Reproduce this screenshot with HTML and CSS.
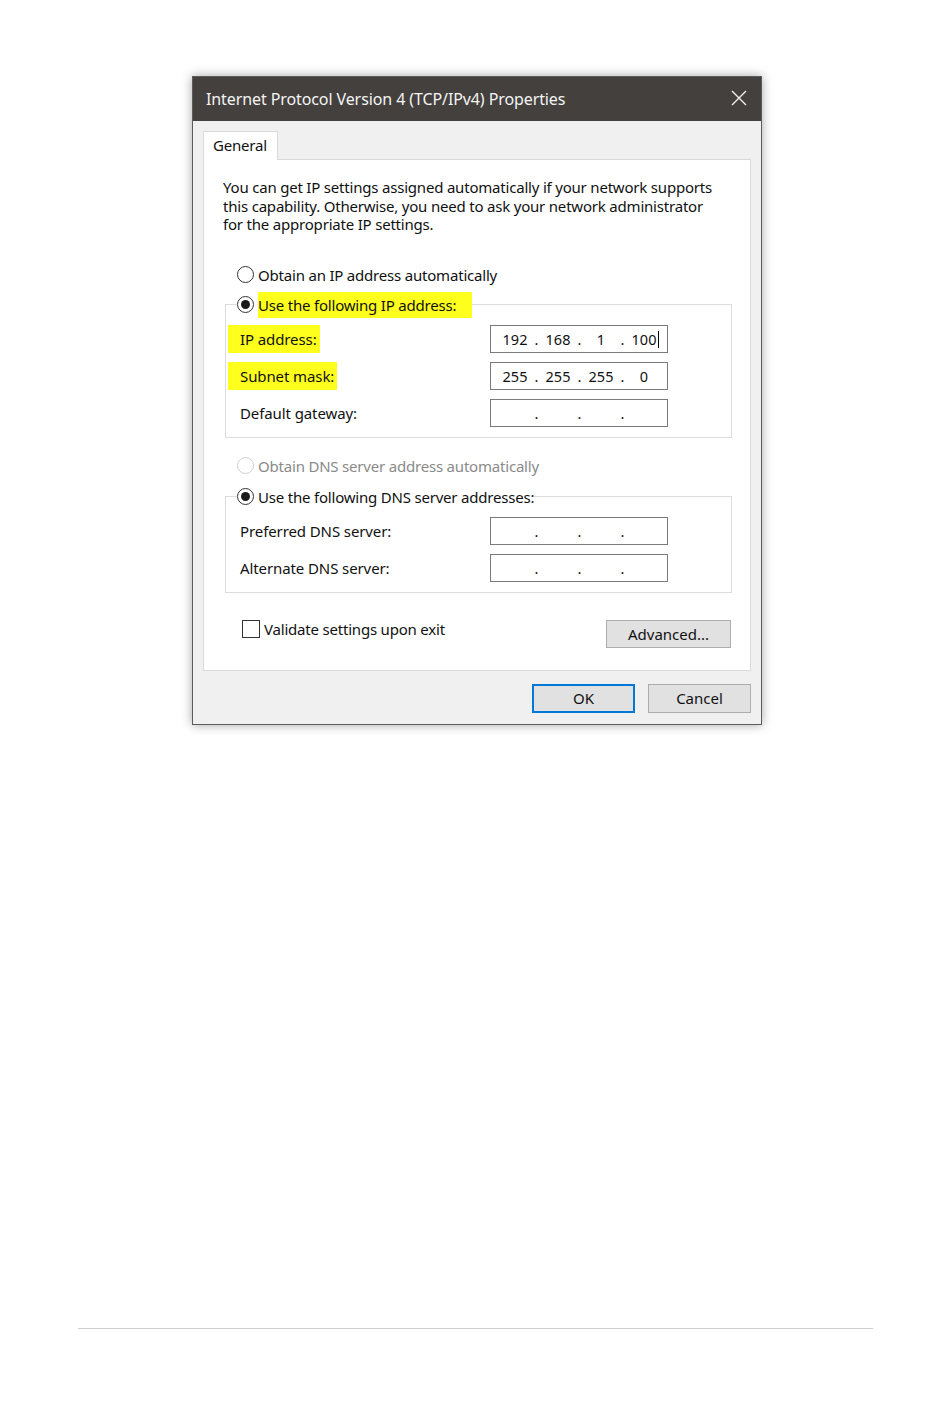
FILE: index.html
```html
<!DOCTYPE html>
<html lang="en">
<head>
    <meta charset="UTF-8">
    <title>Internet Protocol Version 4 (TCP/IPv4) Properties</title>
    <link rel="stylesheet" href="styles.css">
</head>
<body>
    <div class="page">
        <div class="dialog">
            <div class="titlebar">
                <span class="title">Internet Protocol Version 4 (TCP/IPv4) Properties</span>
                <svg class="close" width="16" height="16" viewBox="0 0 16 16">
                    <path d="M1 1 L15 15 M15 1 L1 15" stroke="#f2f2f2" stroke-width="1.4" fill="none"/>
                </svg>
            </div>

            <div class="dialog-body">
                <div class="tab">General</div>
                <div class="panel">
                    <p class="intro">You can get IP settings assigned automatically if your network supports<br>this capability. Otherwise, you need to ask your network administrator<br>for the appropriate IP settings.</p>

                    <div class="option first">
                        <span class="radio"></span>
                        <span>Obtain an IP address automatically</span>
                    </div>
                    <fieldset class="group">
                        <legend class="option">
                            <span class="radio checked"></span>
                            <span class="mark legend-mark">Use the following IP address:</span>
                        </legend>
                        <div class="row">
                            <span class="label"><span class="mark">IP address:</span></span>
                            <div class="ip-box">
                                <span class="octet">192</span><span class="dot">.</span><span class="octet">168</span><span class="dot">.</span><span class="octet">1</span><span class="dot">.</span><span class="octet caret">100</span>
                            </div>
                        </div>
                        <div class="row">
                            <span class="label"><span class="mark">Subnet mask:</span></span>
                            <div class="ip-box">
                                <span class="octet">255</span><span class="dot">.</span><span class="octet">255</span><span class="dot">.</span><span class="octet">255</span><span class="dot">.</span><span class="octet">0</span>
                            </div>
                        </div>
                        <div class="row">
                            <span class="label">Default gateway:</span>
                            <div class="ip-box">
                                <span class="octet"></span><span class="dot">.</span><span class="octet"></span><span class="dot">.</span><span class="octet"></span><span class="dot">.</span><span class="octet"></span>
                            </div>
                        </div>
                    </fieldset>

                    <div class="option second disabled">
                        <span class="radio"></span>
                        <span>Obtain DNS server address automatically</span>
                    </div>
                    <fieldset class="group">
                        <legend class="option">
                            <span class="radio checked"></span>
                            <span>Use the following DNS server addresses:</span>
                        </legend>
                        <div class="row">
                            <span class="label">Preferred DNS server:</span>
                            <div class="ip-box">
                                <span class="octet"></span><span class="dot">.</span><span class="octet"></span><span class="dot">.</span><span class="octet"></span><span class="dot">.</span><span class="octet"></span>
                            </div>
                        </div>
                        <div class="row">
                            <span class="label">Alternate DNS server:</span>
                            <div class="ip-box">
                                <span class="octet"></span><span class="dot">.</span><span class="octet"></span><span class="dot">.</span><span class="octet"></span><span class="dot">.</span><span class="octet"></span>
                            </div>
                        </div>
                    </fieldset>

                    <div class="bottom-row">
                        <div class="check-option">
                            <span class="checkbox"></span>
                            <span>Validate settings upon exit</span>
                        </div>
                        <button class="btn advanced">Advanced...</button>
                    </div>
                </div>

                <div class="footer">
                    <button class="btn ok">OK</button>
                    <button class="btn">Cancel</button>
                </div>
            </div>
        </div>

        <div class="rule"></div>
    </div>
</body>
</html>
```

FILE: styles.css
```css
body {
    margin: 0;
    background: #ffffff;
    font-family: 'Noto Sans', 'Open Sans', sans-serif;
    font-size: 15px;
    color: #111;
}

.page {
    padding-top: 76px;
}

.dialog {
    width: 568px;
    margin-left: 192px;
    border: 1px solid #5c5c5c;
    background: #f0f0f0;
    box-shadow: 0 0 10px rgba(0,0,0,0.35);
}

.titlebar {
    height: 44px;
    background: #43403d;
    display: flex;
    align-items: center;
    justify-content: space-between;
    padding: 0 14px 0 13px;
}

.title {
    color: #f4f4f4;
    font-size: 16px;
    letter-spacing: -0.1px;
}

.close {
    margin-top: -2px;
}

.dialog-body {
    padding: 10px 10px 11px 10px;
}

.tab {
    position: relative;
    width: 64px;
    height: 28px;
    line-height: 26px;
    padding-left: 9px;
    background: #fff;
    border: 1px solid #d9d9d9;
    border-bottom: none;
    margin-bottom: -1px;
    letter-spacing: -0.2px;
}

.panel {
    background: #fff;
    border: 1px solid #d9d9d9;
    padding: 18px 19px 22px 19px;
}

.intro {
    margin: 0;
    line-height: 18.5px;
    letter-spacing: -0.2px;
}

.option {
    display: flex;
    align-items: center;
    gap: 4px;
    height: 22px;
    letter-spacing: -0.2px;
}

.option.first {
    margin: 30px 0 0 14px;
}

.option.second {
    margin: 17px 0 0 14px;
}

.option.disabled {
    color: #8a8a8a;
}

.option.disabled .radio {
    border-color: #cfcfcf;
}

.radio {
    width: 15px;
    height: 15px;
    border: 1px solid #333;
    border-radius: 50%;
    background: #fff;
    display: flex;
    align-items: center;
    justify-content: center;
}

.radio.checked::after {
    content: "";
    width: 9px;
    height: 9px;
    border-radius: 50%;
    background: #1a1a1a;
}

.group {
    margin: 8px -1px 0 2px;
    padding: 9px 0 10px 14px;
    border: 1px solid #dcdcdc;
    min-width: 0;
}

.group + .option {
    margin-top: 17px;
}

.option.second + .group {
    margin-top: 9px;
}

.group legend {
    padding: 0;
    margin-left: -3px;
}

.mark {
    background: #ffff1e;
}

.legend-mark {
    padding: 3px 16px 3px 0;
}

.row {
    display: flex;
    align-items: center;
    height: 28px;
}

.row + .row {
    margin-top: 9px;
}

.label {
    width: 250px;
    letter-spacing: -0.1px;
}

.label .mark {
    display: inline-block;
    margin-left: -12px;
    padding: 4px 3px 4px 12px;
}

.ip-box {
    width: 167px;
    height: 26px;
    border: 1px solid #7a7a7a;
    background: #fff;
    display: flex;
    align-items: center;
    padding-left: 9px;
    font-size: 14.5px;
}

.octet {
    width: 30px;
    text-align: center;
}

.dot {
    width: 13px;
    text-align: center;
}

.caret {
    position: relative;
}

.caret::after {
    content: "";
    position: absolute;
    right: 0;
    top: 2px;
    width: 1px;
    height: 17px;
    background: #000;
}

.bottom-row {
    display: flex;
    justify-content: space-between;
    align-items: flex-start;
    margin-top: 27px;
    padding-left: 19px;
}

.check-option {
    display: flex;
    align-items: center;
    gap: 4px;
    margin-top: -1px;
    letter-spacing: -0.2px;
}

.checkbox {
    width: 16px;
    height: 16px;
    border: 1px solid #333;
    background: #fff;
}

.btn {
    font-family: 'Noto Sans', 'Open Sans', sans-serif;
    font-size: 15px;
    color: #111;
    background: #e1e1e1;
    border: 1px solid #adadad;
    height: 29px;
    width: 103px;
    padding: 0;
}

.btn.advanced {
    width: 125px;
    height: 28px;
}

.btn.ok {
    border: 2px solid #0078d7;
}

.footer {
    display: flex;
    justify-content: flex-end;
    gap: 13px;
    margin-top: 13px;
}

.rule {
    margin: 603px 77px 0 78px;
    height: 1px;
    background: #cfcfcf;
    box-shadow: 0 1px 2px rgba(0,0,0,0.06);
}
```
